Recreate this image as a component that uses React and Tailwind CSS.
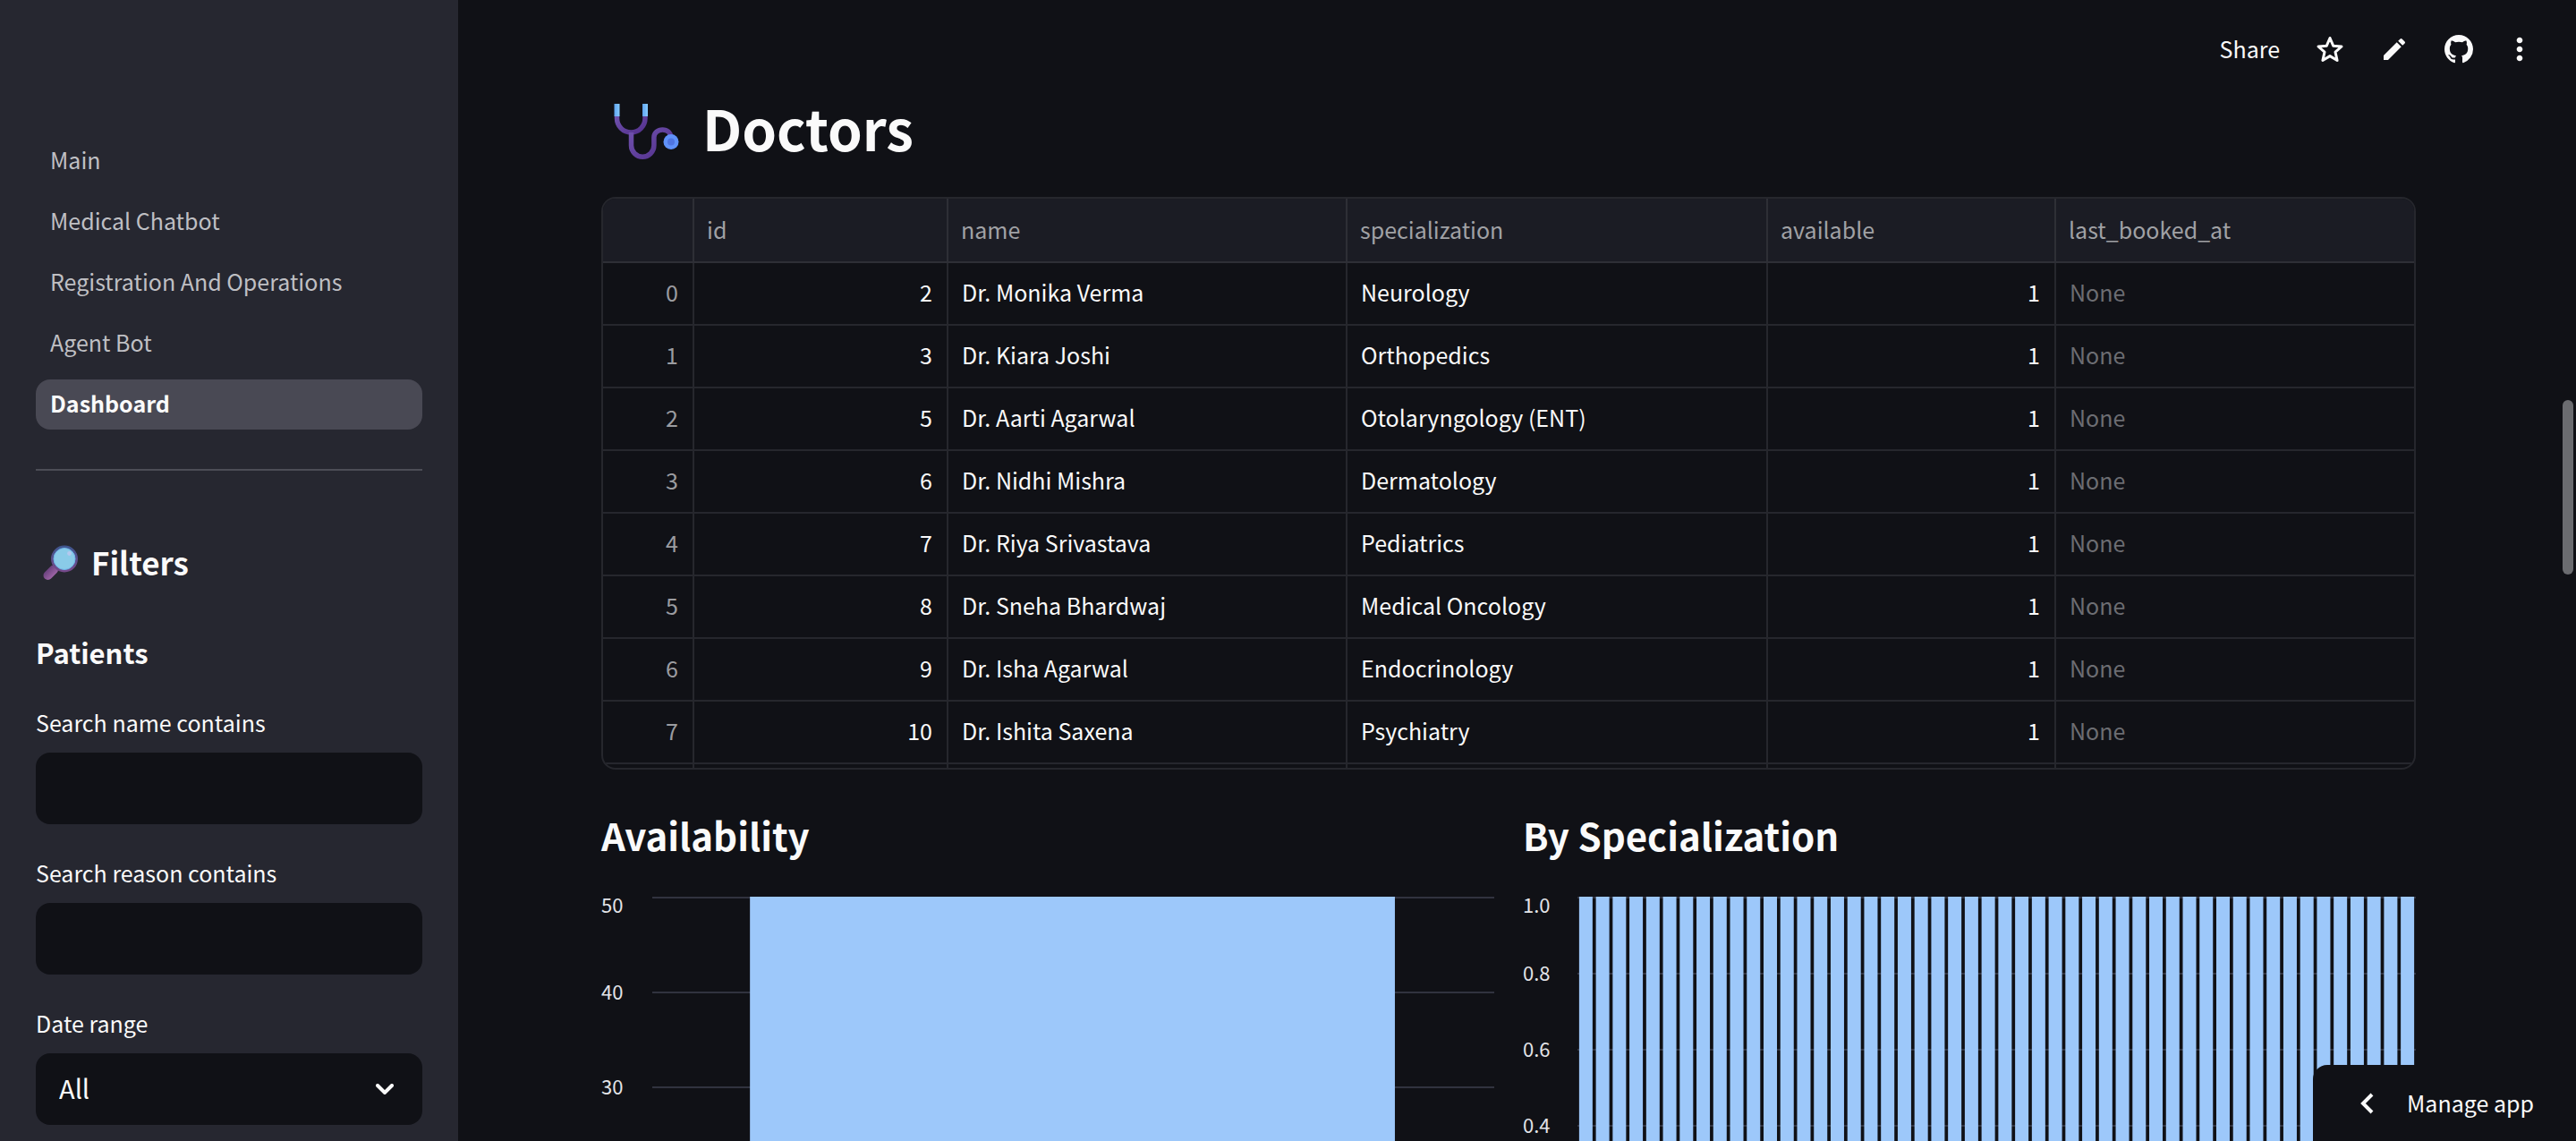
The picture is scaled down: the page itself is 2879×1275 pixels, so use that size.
import { MdEdit, MdMoreVert } from "react-icons/md";

const pages = ["Main", "Medical Chatbot", "Registration And Operations", "Agent Bot", "Dashboard"];

const doctors = [
  [2, "Dr. Monika Verma", "Neurology"],
  [3, "Dr. Kiara Joshi", "Orthopedics"],
  [5, "Dr. Aarti Agarwal", "Otolaryngology (ENT)"],
  [6, "Dr. Nidhi Mishra", "Dermatology"],
  [7, "Dr. Riya Srivastava", "Pediatrics"],
  [8, "Dr. Sneha Bhardwaj", "Medical Oncology"],
  [9, "Dr. Isha Agarwal", "Endocrinology"],
  [10, "Dr. Ishita Saxena", "Psychiatry"],
];

function SearchIcon() {
  return (
    <svg viewBox="0 0 40 40" className="size-10" aria-hidden="true">
      <defs>
        <linearGradient id="rim" x1="0" y1="0" x2="0" y2="1">
          <stop offset="0" stopColor="#40568f" />
          <stop offset="1" stopColor="#75498a" />
        </linearGradient>
        <linearGradient id="grip" x1="0" y1="0" x2="1" y2="1">
          <stop offset="0" stopColor="#6d4380" />
          <stop offset="1" stopColor="#9a62a3" />
        </linearGradient>
      </defs>
      <path d="M12 28.500 5.500 35" stroke="url(#grip)" strokeWidth="10" strokeLinecap="round" />
      <circle cx="24" cy="16.500" r="13.500" fill="#8acbe8" stroke="url(#rim)" strokeWidth="3" />
      <circle cx="24" cy="16.500" r="12" fill="none" stroke="#6fb7ea" strokeWidth="1" />
      <circle cx="29.500" cy="10.500" r="2.400" fill="#b5c8ee" />
    </svg>
  );
}

function StethoscopeIcon() {
  return (
    <svg viewBox="0 0 74 64" className="h-16 w-[74px] shrink-0" fill="none" aria-hidden="true">
      <defs>
        <linearGradient id="tube" x1="0" y1="0" x2="1" y2="1">
          <stop offset="0" stopColor="#6f51ad" />
          <stop offset="1" stopColor="#53308c" />
        </linearGradient>
        <linearGradient id="tip" x1="0" y1="0" x2="1" y2="0">
          <stop offset="0" stopColor="#5fa4f0" />
          <stop offset="1" stopColor="#86cbff" />
        </linearGradient>
      </defs>
      <path d="M3.500 13v3c0 9 7 16 15.800 16S35 25 35 16v-3" stroke="url(#tube)" strokeWidth="5.500" />
      <path d="M19.500 32v14.500a12.700 12.700 0 0 0 25.400 0V37.500c0-5 4.300-8.500 9.600-8.500s9 3.500 9.500 8.500" stroke="url(#tube)" strokeWidth="5.500" />
      <rect x="0.500" y="0" width="6" height="14" fill="url(#tip)" />
      <rect x="32" y="0" width="6" height="14" fill="url(#tip)" />
      <circle cx="64" cy="42.500" r="8.500" fill="#6092fa" />
      <circle cx="64" cy="42.500" r="4" fill="#4f75e2" />
    </svg>
  );
}

function GithubMark() {
  return (
    <svg viewBox="0 0 16 16" className="size-8" fill="currentColor" aria-hidden="true">
      <path d="M8 0C3.580 0 0 3.580 0 8c0 3.540 2.290 6.530 5.470 7.590.4.070.55-.17.55-.38 0-.19-.01-.82-.01-1.490-2.010.37-2.530-.49-2.690-.94-.09-.23-.48-.94-.82-1.130-.28-.15-.68-.52-.01-.53.63-.01 1.080.58 1.230.82.72 1.210 1.870.87 2.330.66.070-.52.28-.87.51-1.070-1.780-.2-3.640-.89-3.640-3.950 0-.87.31-1.590.82-2.150-.08-.2-.36-1.020.08-2.120 0 0 .67-.21 2.200.82.64-.18 1.320-.27 2-.27s1.360.09 2 .27c1.530-1.040 2.200-.82 2.200-.82.44 1.100.16 1.920.08 2.120.51.56.82 1.270.82 2.150 0 3.070-1.870 3.750-3.650 3.950.29.25.54.73.54 1.480 0 1.070-.01 1.930-.01 2.200 0 .21.15.46.55.38A8.010 8.010 0 0 0 16 8c0-4.420-3.580-8-8-8z" />
    </svg>
  );
}

function Field({ id, label, children }) {
  return (
    <div className="flex flex-col gap-[14px]">
      <label htmlFor={id} className="text-[25px] leading-10">{label}</label>
      {children}
    </div>
  );
}

function Sidebar() {
  return (
    <aside className="w-[512px] shrink-0 overflow-hidden bg-[#262730] px-10 pt-[152px]">
      <nav className="flex flex-col gap-3">
        {pages.map((page) => (
          <a
            key={page}
            href="#"
            className={
              page === "Dashboard"
                ? "h-14 rounded-2xl bg-[#494954] px-4 text-[25px] leading-[52px] font-bold text-[#fafafa]"
                : "h-14 rounded-2xl px-4 text-[25px] leading-[52px] text-[#bfbfc3]"
            }
          >
            {page}
          </a>
        ))}
      </nav>
      <hr className="mt-11 border-t-2 border-[#4c4d56]" />
      <h2 className="mt-[78px] flex items-center gap-[14px] pl-2 text-[35px] leading-12 font-bold">
        <SearchIcon />
        Filters
      </h2>
      <h3 className="mt-[53px] text-[31px] leading-12 font-bold">Patients</h3>
      <form className="mt-[34px] flex flex-col gap-[34px]">
        <Field id="name" label="Search name contains">
          <input id="name" type="text" className="h-20 rounded-2xl bg-[#101116] px-6 text-[28px] outline-none" />
        </Field>
        <Field id="reason" label="Search reason contains">
          <input id="reason" type="text" className="h-20 rounded-2xl bg-[#101116] px-6 text-[28px] outline-none" />
        </Field>
        <Field id="range" label="Date range">
          <div className="relative">
            <select id="range" className="h-20 w-full appearance-none rounded-2xl bg-[#101116] px-[26px] pb-[2px] text-[29px] outline-none">
              <option>All</option>
            </select>
            <svg viewBox="0 0 20 12" className="pointer-events-none absolute top-[34px] right-8 h-3 w-5" fill="none" stroke="#fafafa" strokeWidth="4" strokeLinecap="round" aria-hidden="true">
              <path d="m2 2 8 8 8-8" />
            </svg>
          </div>
        </Field>
      </form>
    </aside>
  );
}

function Toolbar() {
  return (
    <header className="absolute top-0 right-0 flex h-[110px] items-center gap-8 pr-[47px] text-[#fafafa]">
      <button className="mr-1 text-[25px]">Share</button>
      <button aria-label="Favorite" className="flex w-10 justify-center">
        <svg viewBox="0 0 32 32" className="size-8" fill="none" stroke="currentColor" strokeWidth="3" strokeLinejoin="round">
          <path d="m16 3.500 3.700 8.700 9.300.8-7 6.200 2.100 9.300-8.100-4.900-8.100 4.900 2.100-9.300-7-6.200 9.300-.8z" />
        </svg>
      </button>
      <button aria-label="Edit" className="flex w-10 justify-center"><MdEdit size={32} /></button>
      <button aria-label="View source" className="flex w-10 justify-center"><GithubMark /></button>
      <button aria-label="More options" className="flex w-8 justify-center"><MdMoreVert size={40} className="shrink-0" /></button>
    </header>
  );
}

const head = "border-r-2 border-b-2 border-[#2e2f36] pr-4 pb-[2px] pl-[14px] text-left font-normal last:border-r-0";
const cell = "border-r-2 border-b-2 border-[#26272d] pr-4 pb-1 pl-[15px] last:border-r-0";
const columns = ["index", "id", "name", "specialization", "available", "last_booked_at"];

function DoctorsTable() {
  return (
    <div className="mt-9 h-[640px] overflow-hidden rounded-2xl border-2 border-[#26272d]">
      <table className="w-full table-fixed border-separate border-spacing-0 text-[25px] leading-[64px]">
        <colgroup>
          <col className="w-[102px]" />
          <col className="w-[284px]" />
          <col className="w-[446px]" />
          <col className="w-[470px]" />
          <col className="w-[322px]" />
          <col />
        </colgroup>
        <thead className="bg-[#1b1c24] text-[#a0a1a5]">
          <tr className="h-18">
            <th className={head} aria-label="row" />
            <th className={head}>id</th>
            <th className={head}>name</th>
            <th className={head}>specialization</th>
            <th className={head}>available</th>
            <th className={head}>last_booked_at</th>
          </tr>
        </thead>
        <tbody>
          {doctors.map(([id, name, field], i) => (
            <tr key={id} className="h-[70px]">
              <td className={cell + " text-right text-[#9b9ca0]"}>{i}</td>
              <td className={cell + " text-right"}>{id}</td>
              <td className={cell}>{name}</td>
              <td className={cell}>{field}</td>
              <td className={cell + " text-right"}>1</td>
              <td className={cell + " text-[#6c6d72]"}>None</td>
            </tr>
          ))}
          <tr className="h-[70px]" aria-hidden="true">
            {columns.map((column) => (
              <td key={column} className={cell} />
            ))}
          </tr>
        </tbody>
      </table>
    </div>
  );
}

function Chart({ title, labels, step, axis, bars }) {
  return (
    <section className="min-w-0 flex-1">
      <h2 className="text-[42px] leading-[58px] font-bold">{title}</h2>
      <div className="mt-10 flex">
        <div className={axis}>
          {labels.map((label, i) => (
            <div key={label} className={step}>
              <span className={i === 0 ? "block leading-4" : "block -translate-y-4 leading-[30px]"}>{label}</span>
            </div>
          ))}
        </div>
        <div className="relative min-w-0 flex-1">
          {labels.map((label) => (
            <div key={label} className={step}>
              <div className="h-[2px] bg-[#31333f]" />
            </div>
          ))}
          <svg className="absolute inset-0 h-full w-full" aria-hidden="true">
            {bars.map((bar, i) => (
              <rect key={i} x={bar.x + "%"} y="0" width={bar.w + "%"} height="100%" fill="#9dc8fa" />
            ))}
          </svg>
        </div>
      </div>
    </section>
  );
}

const specialtyBars = Array.from({ length: 50 }, (_, i) => ({ x: i * 2 + 0.2, w: 1.6 }));

export default function App() {
  return (
    <div className="relative flex h-screen overflow-hidden bg-[#101116] font-['Noto_Sans_CJK_SC','Noto_Sans',sans-serif] text-[#fafafa]">
      <Sidebar />
      <main className="min-w-0 flex-1 overflow-hidden px-40 pt-28">
        <div className="mr-[19px]">
          <h1 className="flex h-18 items-center gap-[25px] pl-[14px] text-[62px] font-bold">
            <StethoscopeIcon />
            <span className="pb-3">Doctors</span>
          </h1>
          <DoctorsTable />
          <div className="mt-11 flex gap-8">
            <Chart
              title="Availability"
              labels={["50", "40", "30"]}
              step="h-[106px]"
              axis="w-[57px] text-[22px] text-[#e3e4e8]"
              bars={[{ x: 11.6, w: 76.6 }]}
            />
            <Chart
              title="By Specialization"
              labels={["1.0", "0.8", "0.6", "0.4"]}
              step="h-[85px]"
              axis="w-[61px] text-[22px] text-[#e3e4e8]"
              bars={specialtyBars}
            />
          </div>
        </div>
      </main>
      <Toolbar />
      <div className="absolute top-[447px] right-[3px] h-[195px] w-3 rounded-full bg-[#6b6c70]" />
      <button className="absolute right-0 bottom-0 flex h-[85px] items-center gap-[37px] rounded-tl-2xl bg-[#101116] pr-[47px] pl-[52px] text-[25px]">
        <svg viewBox="0 0 16 24" className="h-6 w-4" fill="none" stroke="currentColor" strokeWidth="4" aria-hidden="true">
          <path d="M14 2 4 12l10 10" />
        </svg>
        Manage app
      </button>
    </div>
  );
}
